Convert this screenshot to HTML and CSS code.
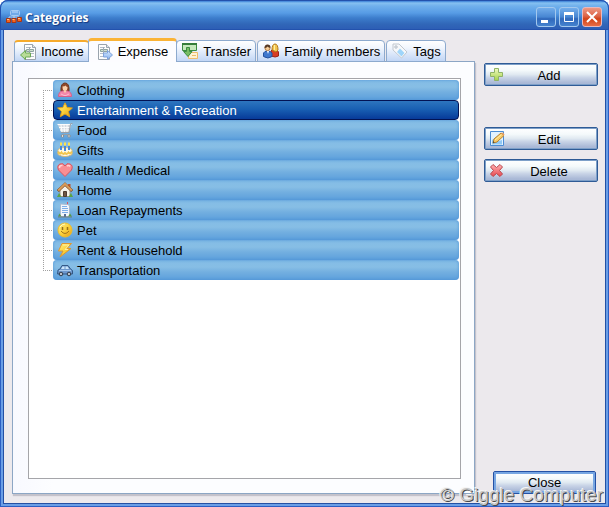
FILE: index.html
```
<!DOCTYPE html>
<html lang="en">
<head>
<meta charset="utf-8">
<title>Categories</title>
<link rel="stylesheet" href="styles.css">
</head>
<body>
<svg class="defs" aria-hidden="true">
  <defs>
    <linearGradient id="gold" x1="0" y1="0" x2="1" y2="1"><stop offset="0" stop-color="#fff08a"/><stop offset=".5" stop-color="#fbd23c"/><stop offset="1" stop-color="#e79b14"/></linearGradient>
    <linearGradient id="red" x1="0" y1="0" x2="0" y2="1"><stop offset="0" stop-color="#ffb3b3"/><stop offset="1" stop-color="#e8474f"/></linearGradient>
    <linearGradient id="green" x1="0" y1="0" x2="0" y2="1"><stop offset="0" stop-color="#f0fac0"/><stop offset="1" stop-color="#a5d24a"/></linearGradient>
    <linearGradient id="blue" x1="0" y1="0" x2="0" y2="1"><stop offset="0" stop-color="#d8ebff"/><stop offset="1" stop-color="#86b2ee"/></linearGradient>
    <g id="sheet">
      <path d="M1.500.5h8l3 3v12h-11z" fill="#fdfdfd" stroke="#9aa4ae"/>
      <path d="M9.500.5v3h3" fill="#dfe5ea" stroke="#9aa4ae"/>
      <path d="M3 3.500h5M3 9.500h8M3 12.500h8" stroke="#b5bec8"/>
      <path d="M3.500 5.500h7v2h-7z" fill="#cfe0cf" stroke="#8da3a0"/>
      <path d="M6.500 3v10" stroke="#a0acb8"/>
    </g>
  </defs>
</svg>
<main class="window">
  <header class="titlebar">
    <svg class="icon" viewBox="0 0 16 16" aria-hidden="true">
      <path d="M3 10V8h10v2M8 5v5" fill="none" stroke="#b8d4f4"/>
      <rect x="4.500" y="1.500" width="9" height="5" rx="1" fill="#70a9e8" stroke="#a6cbf4"/>
      <path d="M6 3h6" stroke="#bddcff"/>
      <path d="M.5 9.500h4v4h-4zM6 9.500h4v4H6zM11.500 8.500h4v4h-4z" fill="#f4641e" stroke="#a63616"/>
      <path d="M1 10.500h2M6.500 10.500h2M12 9.500h2" stroke="#ffc48a"/>
    </svg>
    <h1>Categories</h1>
    <div class="captions">
      <button class="caption" aria-label="Minimize"><svg viewBox="0 0 18 18"><path d="M4 13.500h7" stroke="#fff" stroke-width="3"/></svg></button>
      <button class="caption" aria-label="Maximize"><svg viewBox="0 0 18 18"><path d="M4.500 4.500v9h9v-9" fill="none" stroke="#fff"/><path d="M4 5.500h10" stroke="#fff" stroke-width="3"/></svg></button>
      <button class="caption caption-close" aria-label="Close window"><svg viewBox="0 0 18 18"><path d="M4 4l10 10M14 4L4 14" stroke="#fff" stroke-width="2"/></svg></button>
    </div>
  </header>
  <div class="content">
    <section class="notebook">
      <div class="tabs" role="tablist">
        <button class="tab hot" role="tab"><svg class="icon" viewBox="0 0 16 16"><g transform="translate(3)"><use href="#sheet"/></g><path d="M.5 11l5-4.500v2.500h5v4h-5v2.500z" fill="#b8dc98" stroke="#6aa855"/></svg><span>Income</span></button>
        <button class="tab active" role="tab" aria-selected="true"><svg class="icon" viewBox="0 0 16 16"><use href="#sheet"/><path d="M15.500 11l-5-4.500v2.500h-4v4h4v2.500z" fill="url(#blue)" stroke="#7ea2dc"/></svg><span>Expense</span></button>
        <button class="tab" role="tab"><svg class="icon" viewBox="0 0 16 16"><path d="M.5.500h14v7H.5z" fill="#c6e8bd" stroke="#3b8c41"/><path d="M0 1h15" stroke="#357c3a" stroke-width="2"/><path d="M6.500 9.500h9v6h-9z" fill="#fff3d4" stroke="#f0bd6b"/><path d="M10 12.500h4" stroke="#eebd68"/><path d="M4.500 4.500h3v4H10l-4 5-4.500-5h3z" fill="#78bd63" stroke="#3b8c41"/></svg><span>Transfer</span></button>
        <button class="tab" role="tab"><svg class="icon" viewBox="0 0 16 16"><path d="M8 13V8q1-2 3.500-2T15.500 9v4q-3 2-7.500 0" fill="#d83c24" stroke="#9c2416"/><path d="M9 7q0-6 3-6t3 6l-2 2z" fill="#f2c44e" stroke="#b17618"/><path d="M11.500 2v5" stroke="#fff0a0"/><path d="M.5 13.500V10q1-2 4-2t4.500 2v3.500q-4 3-8.500 0" fill="#3f78ce" stroke="#24519e"/><circle cx="4.500" cy="5" r="2.600" fill="#f6ce9b" stroke="#b47b42"/><path d="M1.500 5q0-3.500 3-3.500t3 3q-2 .5-3-1-1 1.500-3 1.500" fill="#573a26"/><path d="M4 8l1 3 1-3" fill="#fff"/></svg><span>Family members</span></button>
        <button class="tab" role="tab"><svg class="icon" viewBox="0 0 16 16"><path d="M1 1h6l8 8-5.500 6L1 7z" fill="#f7f8fa" stroke="#c2c8d0"/><path d="M8 5.500l4.500 4.500-3 3.500L5 9z" fill="#9fd5fa"/><circle cx="4" cy="4" r="1.200" fill="#fff" stroke="#aeb8c3"/></svg><span>Tags</span></button>
      </div>
      <div class="panel" role="tabpanel">
        <ul class="tree">
          <li><button class="item"><svg class="icon" viewBox="0 0 16 16"><path d="M4 9Q3.500 1 8 1t4 8z" fill="#8e4829" stroke="#6e351f"/><path d="M1.500 14.500q0-5 4-5.500h5q4 .5 4 5.500z" fill="#f487aa" stroke="#d85e88"/><path d="M5.500 4.500q2.500 0 3-1 .5 1 2 1.500 0 4-2.500 4T5.500 4.500" fill="#fbd1ad"/><path d="M6.500 9L8 11l1.500-2" fill="#fbd1ad"/><path d="M4 12l3 1.500h2l3-1.500" fill="none" stroke="#fbbcd0"/></svg><span>Clothing</span></button></li>
          <li><button class="item selected"><svg class="icon" viewBox="0 0 16 16"><path d="M8 .8l2.200 4.700 5.200.5-3.900 3.500 1.200 5.300L8 12l-4.700 2.800 1.200-5.300L.6 6l5.200-.5z" fill="url(#gold)" stroke="#dfa018" stroke-linejoin="round"/></svg><span>Entertainment &amp; Recreation</span></button></li>
          <li><button class="item"><svg class="icon" viewBox="0 0 16 16"><path d="M1 3h13l-2 7H4z" fill="#d3d8df"/><path d="M.5 2.500h14M2 5.500h11M3 8h10M4 3l1 7M7 3l.5 7M10 3v7" stroke="#fcfcfc"/><path d="M13.500 2L12 10.500H4M15.500 1.500h-2M5 12.500h7" fill="none" stroke="#999fa8"/><circle cx="5.500" cy="14" r="1.200" fill="#fff" stroke="#888"/><circle cx="12" cy="14" r="1.200" fill="#fff" stroke="#888"/></svg><span>Food</span></button></li>
          <li><button class="item"><svg class="icon" viewBox="0 0 16 16"><path d="M1 9v3.500q7 4 14 0V9z" fill="#fffdf4" stroke="#d9b673"/><ellipse cx="8" cy="8.500" rx="7" ry="3" fill="#fffbe6" stroke="#e7c26b"/><path d="M1 10q2 3 3.500.5Q6 13 8 11q2 2 3.500-.5Q13 12.500 15 10" fill="none" stroke="#f1c54f" stroke-width="2"/><path d="M4 4v4M8 4v5M12 4v4" stroke="#4d88d5" stroke-width="2"/><path d="M4 .5v3M8 .5v3M12 .5v3" stroke="#ffe34d" stroke-width="2"/></svg><span>Gifts</span></button></li>
          <li><button class="item"><svg class="icon" viewBox="0 0 16 16"><path d="M8 14.500L1.500 8Q-.5 3.500 3 2t5 2q1.500-3.500 5-2t1.500 6z" fill="#f98e93" stroke="#d9545f"/><path d="M2.500 6q0-3 3-2.500M10 4q2-1 3 .5" fill="none" stroke="#ffd3d4" stroke-width="1.500"/></svg><span>Health / Medical</span></button></li>
          <li><button class="item"><svg class="icon" viewBox="0 0 16 16"><path d="M11 2h2.500v5H11z" fill="#b85636"/><path d="M3 7l5-4 5 4v7.500H3z" fill="#f7f3e9" stroke="#9c9384"/><path d="M.8 9L8 2.200 15.200 9" fill="none" stroke="#7d491c" stroke-width="3"/><path d="M1.200 8.500L8 2l6.800 6.500" fill="none" stroke="#d99c5a" stroke-width="2"/><path d="M6.500 9.500h3v5h-3z" fill="#705643" stroke="#4f3c32"/><path d="M0 15l2-4 2.500 4zM11.500 15l2.500-4 2 4z" fill="#5ba442"/></svg><span>Home</span></button></li>
          <li><button class="item"><svg class="icon" viewBox="0 0 16 16"><path d="M10.500 0v4" stroke="#dc5360"/><path d="M3.500 2l7 .5 2 1v11h-9z" fill="#f2f6fb" stroke="#a9b9ce"/><path d="M5 4.500h5M5 6.500h6M5 8.500h6M5 10.500h6" stroke="#7caeea"/><path d="M7 12h2v3H7z" fill="#546f98"/><path d="M1 14.500l1.500-3 2 3zM11 14.500l2-3 2 3z" fill="#579b42"/><path d="M1 15h14" stroke="#737e79"/></svg><span>Loan Repayments</span></button></li>
          <li><button class="item"><svg class="icon" viewBox="0 0 16 16"><circle cx="8" cy="8" r="7" fill="url(#gold)" stroke="#edbb2b"/><path d="M5.500 5v3M10.500 5v3" stroke="#98711b" stroke-width="1.500"/><path d="M4 9q4 5 8 0" fill="none" stroke="#a4761b"/><path d="M3 5q2-3 5-3" fill="none" stroke="#fffac0"/></svg><span>Pet</span></button></li>
          <li><button class="item"><svg class="icon" viewBox="0 0 16 16"><path d="M5 1.500h9.500L10 6.500h4L3 15l3-6H1.500z" fill="url(#gold)" stroke="#e0962e" stroke-linejoin="round"/><path d="M6 3h6L8 7.500h3" fill="none" stroke="#fff0a0"/></svg><span>Rent &amp; Household</span></button></li>
          <li><button class="item"><svg class="icon" viewBox="0 0 16 16"><path d="M1 8l2-1 2-3.500h6L13.500 7l2 1.500V12H.5z" fill="#6e98cd" stroke="#355986"/><path d="M4 7l1.500-2.500h2V7zM8.500 4.500h2L12 7H8.500z" fill="#cce6fa"/><path d="M2 8.500h12" stroke="#a8c9ec"/><circle cx="4" cy="12" r="1.800" fill="#bac0ca" stroke="#303c4c"/><circle cx="12" cy="12" r="1.800" fill="#bac0ca" stroke="#303c4c"/></svg><span>Transportation</span></button></li>
        </ul>
      </div>
    </section>
    <aside class="actions">
      <button class="action add"><svg class="icon" viewBox="0 0 16 16"><path d="M5.500 1.500h4v4h4v4h-4v4h-4v-4h-4v-4h4z" fill="url(#green)" stroke="#8fb366"/></svg><span>Add</span></button>
      <button class="action"><svg class="icon" viewBox="0 0 16 16"><path d="M1.500.500h13v14h-13z" fill="#e2f2ff" stroke="#4b8cd5"/><path d="M3 13.500V9l4-3 3 4 3-1v4.500z" fill="#91c9f5"/><path d="M4 12l1-4 7-6 3 2.500-7 6.500z" fill="#f9cb6a" stroke="#b6812c"/><path d="M6 9l6.500-5.500" stroke="#fff0a5"/><path d="M4 12l1.500-.5L4.500 10z" fill="#333"/><path d="M12 2l2-.5 1.500 2-1 1.500z" fill="#e59f63"/></svg><span>Edit</span></button>
      <button class="action"><svg class="icon" viewBox="0 0 16 16"><path d="M1.500 4L4 1.500l3.500 3 3.500-3L13.500 4l-3 3.500 3 3.500-2.500 2.500-3.500-3-3.500 3L1.500 11l3-3.500z" fill="url(#red)" stroke="#b94a50"/></svg><span>Delete</span></button>
      <button class="action close"><span>Close</span></button>
    </aside>
  </div>
  <div class="watermark">© Giggle Computer</div>
</main>
</body>
</html>
```
FILE: styles.css
```
* { box-sizing: border-box; }
body { margin: 0; background: #fff; color: #000; font: 13px/16px "Liberation Sans", Arial, sans-serif; }
button { margin: 0; padding: 0; border: 0; background: none; color: inherit; font: inherit; }
.defs { position: absolute; width: 0; height: 0; }
.icon { width: 16px; height: 16px; flex: none; }

.window {
  position: relative;
  display: flex;
  flex-direction: column;
  min-height: 100vh;
  padding: 0 4px 4px;
  border-radius: 8px 8px 0 0;
  overflow: hidden;
  background: #ece9ed;
  box-shadow: inset 0 0 0 1px #2b5fc4, inset 0 0 0 3px #6a9ee6, inset 0 0 0 4px #2450a4;
}

.titlebar {
  display: flex;
  align-items: center;
  height: 30px;
  margin: 0 -4px;
  padding: 3px 6px 0 5px;
  border-radius: 8px 8px 0 0;
  border: 1px solid #2352ad;
  background: linear-gradient(#397ed6 0, #86c1f1 2px, #70b0ec 5px, #579ce5 12px, #3c7dcc 17px, #3167b8 23px, #2d5eb5 28px);
}
.titlebar h1 {
  flex: 1;
  margin: 0 0 0 3px;
  padding-top: 2px;
  color: #fff;
  font: bold 12px/16px "Open Sans", "Noto Sans", sans-serif;
  text-shadow: 1px 1px 1px #123982;
}
.captions { display: flex; gap: 3px; }
.caption {
  width: 20px;
  height: 20px;
  border: 1px solid #a3c8ee;
  border-radius: 3px;
  background: linear-gradient(#72adeb, #4786d2 50%, #3068bb 60%, #4583cf);
}
.caption svg { display: block; width: 18px; height: 18px; }
.caption-close { background: linear-gradient(#ee9882, #dc6448 45%, #d24318 60%, #e66c46); border-color: #e8b8bc; }

.content { flex: 1; display: flex; gap: 9px; padding: 8px 7px 9px 8px; }
.notebook { flex: 1; display: flex; flex-direction: column; }
.tabs { position: relative; z-index: 1; display: flex; align-items: flex-end; height: 24px; margin-bottom: -1px; padding-left: 2px; }
.tab {
  display: flex;
  align-items: center;
  gap: 5px;
  height: 22px;
  padding: 0 4px 0 5px;
  border: 1px solid #8daace;
  border-radius: 4px 4px 0 0;
  background: linear-gradient(#fff, #f0f5fd 35%, #c2d6f5);
  white-space: nowrap;
}
.tab span, .item span { padding-top: 1px; }
.tab + .tab { margin-left: 1px; }
.tab.hot { border-top: 2px solid #f6ab2c; }
.tab + .tab.active {
  position: relative;
  height: 24px;
  margin: 0 -2px 0 -1px;
  padding: 0 8px;
  border-top: 3px solid #fbb336;
  border-bottom: 0;
  background: #fcfcff;
}
.tab.active span { padding-top: 0; }
.panel {
  flex: 1;
  display: flex;
  padding: 16px 13px 14px 15px;
  border: 1px solid #8ca6c5;
  background: linear-gradient(90deg, #f8f9ff, #fcfdff 40px);
  box-shadow: 1px 2px 1px #c4c2cb;
}
.tree { flex: 1; margin: 0; padding: 1px 1px 1px 14px; border: 1px solid #a5a5a9; background: #fff; list-style: none; }
.tree li {
  display: flex;
  align-items: center;
  height: 20px;
  background: repeating-linear-gradient(#a0a0a0 0 1px, transparent 1px 2px) 0 0 / 1px 100% no-repeat;
}
.tree li::before {
  content: "";
  width: 10px;
  height: 1px;
  background: repeating-linear-gradient(90deg, #a0a0a0 0 1px, transparent 1px 2px);
}
.tree li:first-child { background-size: 1px 10px; background-position: 0 100%; }
.tree li:last-child { background-size: 1px 10px; }
.item {
  flex: 1;
  display: flex;
  align-items: center;
  gap: 4px;
  height: 20px;
  padding: 0 4px;
  border-radius: 4px;
  background: linear-gradient(#83bce6, #87bee5 35%, #73afe0 60%, #5c9fdc);
  box-shadow: inset 0 0 3px #4c91d5;
}
.item.selected {
  padding: 0 3px;
  border: 1px solid #021354;
  background: linear-gradient(#2d75bf, #1960b3 45%, #073a99);
  color: #fff;
  box-shadow: none;
}

.actions { display: flex; flex-direction: column; gap: 9px; width: 114px; padding-top: 25px; }
.action {
  display: flex;
  align-items: center;
  height: 23px;
  padding: 0 4px;
  border: 1px solid #2f5b96;
  border-radius: 2px;
  background: linear-gradient(#fff, #f4f9fb 30%, #e0e9f1 50%, #c8d3e6 65%, #a9b8d6 90%);
  box-shadow: inset 0 0 0 1px #7d9fc8;
}
.action span { flex: 1; padding-top: 2px; text-align: center; }
.add { margin-bottom: 32px; }
.close {
  width: 103px;
  margin: auto 2px 0 auto;
  border: 1px solid #2451a5;
  box-shadow: inset 0 0 0 2px #77a6e2;
}
.close span { padding-top: 0; }
.watermark {
  position: absolute;
  right: 6px;
  bottom: 2px;
  color: #c8c8c8;
  font-size: 19px;
  line-height: 20px;
  text-shadow: 1px 1px 0 #484848, -1px -1px 0 #f5f5f5;
  pointer-events: none;
}
```
